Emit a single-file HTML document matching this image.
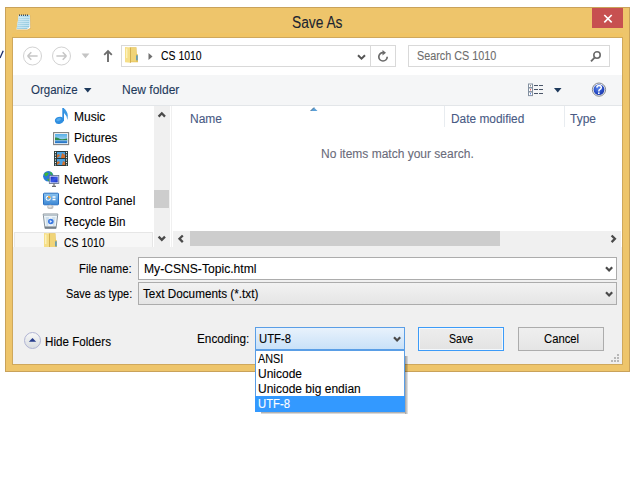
<!DOCTYPE html>
<html><head><meta charset="utf-8">
<style>
*{margin:0;padding:0;box-sizing:border-box}
html,body{width:640px;height:480px;overflow:hidden;background:#fff}
body{position:relative;font-family:"Liberation Sans",sans-serif;font-size:12px;color:#000}
.a{position:absolute}
.t{position:absolute;white-space:nowrap;font-size:12px;line-height:14px;transform-origin:0 0;-webkit-text-stroke:0.1px currentColor}
</style></head><body>

<!-- partial y from background window -->
<svg class="a" style="left:0;top:50px" width="5" height="9"><path d="M3.2 0.8 L0 8" stroke="#1a2a6a" stroke-width="1.3" fill="none"/></svg>

<!-- window frame -->
<div class="a" style="left:5px;top:7px;width:625px;height:365px;background:#eec56b;border:1px solid #c9a25a"></div>
<!-- client inner outline -->
<div class="a" style="left:12px;top:33px;width:611px;height:4px;background:#f0c464"></div>
<div class="a" style="left:12px;top:37px;width:611px;height:328px;border:1px solid #cfa85c"></div>

<!-- title -->
<div class="t" style="left:292px;top:14px;font-size:16px;line-height:18px;color:#1c2430;transform:scaleX(0.86)">Save As</div>

<!-- close -->
<div class="a" style="left:592px;top:8px;width:31px;height:20px;background:#c75050"></div>
<svg class="a" style="left:592px;top:8px" width="31" height="20"><path d="M12.3 7 L19.7 14.4 M19.7 7 L12.3 14.4" stroke="#fff" stroke-width="1.6"/></svg>

<!-- notepad icon -->
<svg class="a" style="left:15px;top:13px" width="18" height="18" viewBox="0 0 18 18">
 <defs><linearGradient id="np" x1="0" y1="0" x2="1" y2="1"><stop offset="0" stop-color="#c8e6f0"/><stop offset="1" stop-color="#88c4dc"/></linearGradient></defs>
 <path d="M4.5 2.3 L15.5 2.3 L16 15.5 L13 17.3 L2.2 17.3 Z" fill="#c9a86a" opacity="0.5"/>
 <path d="M3.8 2 L15 2 L15.2 15 L12.5 16.6 L1.5 16.6 Z" fill="#fdfdfd"/>
 <path d="M3.8 2 L14.8 2 L14.3 13.8 L12 16 L1.6 16 Z" fill="url(#np)"/>
 <path d="M3.6 4.5 H14.7 M3.4 6.5 H14.6 M3.1 8.5 H14.5 M2.8 10.5 H14.4 M2.5 12.5 H14.3 M2.2 14.5 H13" stroke="#d8eef6" stroke-width="0.7"/>
 <path d="M4.5 1.5 v1.3 M6.5 1.5 v1.3 M8.5 1.5 v1.3 M10.5 1.5 v1.3 M12.5 1.5 v1.3" stroke="#2a3040" stroke-width="1"/>
</svg>

<!-- client -->
<div class="a" style="left:13px;top:38px;width:609px;height:326px;background:#fff"></div>

<!-- nav bar -->
<svg class="a" style="left:13px;top:38px" width="120" height="36">
 <circle cx="19.5" cy="18" r="9" fill="none" stroke="#d2d2d2" stroke-width="1"/>
 <path d="M14.6 18 H24.6 M14.6 18 L18.3 14.3 M14.6 18 L18.3 21.7" stroke="#c6c6c6" stroke-width="1.6" fill="none"/>
 <circle cx="48.5" cy="18" r="9" fill="none" stroke="#d2d2d2" stroke-width="1"/>
 <path d="M43.4 18 H53.4 M53.4 18 L49.7 14.3 M53.4 18 L49.7 21.7" stroke="#c6c6c6" stroke-width="1.6" fill="none"/>
 <path d="M68.6 15.6 L76.4 15.6 L72.5 20.2 Z" fill="#c4c4c4"/>
 <path d="M95 13 V24" stroke="#6d6d6d" stroke-width="1.9"/><path d="M91.2 16.8 L95 13 L98.8 16.8" stroke="#6d6d6d" stroke-width="1.8" fill="none"/>
</svg>

<!-- address box -->
<div class="a" style="left:121px;top:45px;width:275px;height:22px;border:1px solid #d9d9d9;background:#fff"></div>
<div class="a" style="left:370px;top:46px;width:1px;height:20px;background:#d9d9d9"></div>
<svg class="a" style="left:124px;top:46px" width="16" height="17" viewBox="0 0 16 17">
 <path d="M5.5 1.2 L12.5 1.2 L12.8 8 L14 8.5 L14 16.3 L5.5 16.3 Z" fill="#e6c45c"/>
 <path d="M6.5 2 L12 2 L12 15.5 L6.5 15.5Z" fill="#f0d478"/>
 <path d="M1 1 L6.5 1.6 L6.5 16.8 L1 16.2 Z" fill="#f6df88"/>
 <path d="M2.8 2.5 L2.8 12" stroke="#fff8d0" stroke-width="1"/>
 <path d="M6.5 1.6 L6.5 16.8" stroke="#caa648" stroke-width="0.8"/>
 <rect x="12.3" y="9.3" width="1.3" height="5" fill="#3a8fd6"/>
</svg>
<svg class="a" style="left:147px;top:52px" width="8" height="9"><path d="M1.5 1 L5.5 4.5 L1.5 8 Z" fill="#707070"/></svg>
<div class="t" style="left:161px;top:49px;color:#000;transform:scaleX(0.87)">CS 1010</div>
<svg class="a" style="left:356px;top:53px" width="11" height="8"><path d="M2 2.2 L5.5 5.6 L9 2.2" stroke="#555" stroke-width="2" fill="none"/></svg>
<svg class="a" style="left:376px;top:49px" width="14" height="14" viewBox="0 0 14 14">
 <path d="M7 3.6 A4.2 4.2 0 1 0 11.2 7.8" stroke="#6a6a6a" stroke-width="1.7" fill="none"/>
 <path d="M6.5 1 L10 3.8 L6.5 6.6 Z" fill="#6a6a6a"/>
</svg>

<!-- search box -->
<div class="a" style="left:408px;top:45px;width:202px;height:22px;border:1px solid #d9d9d9;background:#fff"></div>
<div class="t" style="left:417px;top:49px;color:#6d6d6d;transform:scaleX(0.9)">Search CS 1010</div>
<svg class="a" style="left:589px;top:50px" width="14" height="14" viewBox="0 0 14 14">
 <circle cx="8" cy="5" r="3.2" stroke="#6a6a6a" stroke-width="1.6" fill="none"/>
 <path d="M5.6 7.6 L2 11.4" stroke="#6a6a6a" stroke-width="1.8"/>
</svg>

<!-- toolbar -->
<div class="a" style="left:13px;top:75px;width:609px;height:31px;background:#f5f6f7;border-bottom:1px solid #e3e6e9"></div>
<div class="t" style="left:31px;top:83px;color:#1e395b;transform:scaleX(0.96)">Organize</div>
<svg class="a" style="left:83px;top:87px" width="10" height="7"><path d="M1 1 L8.5 1 L4.75 5.5 Z" fill="#1e395b"/></svg>
<div class="t" style="left:122px;top:83px;color:#1e395b">New folder</div>
<svg class="a" style="left:527px;top:83px" width="18" height="14" viewBox="0 0 18 14">
 <rect x="1.5" y="1" width="4" height="3.6" fill="#fff" stroke="#8390a0" stroke-width="1"/>
 <rect x="1.5" y="5" width="4" height="3.6" fill="#fff" stroke="#8390a0" stroke-width="1"/>
 <rect x="1.5" y="9" width="4" height="3.6" fill="#fff" stroke="#8390a0" stroke-width="1"/>
 <rect x="3" y="2.3" width="1" height="1" fill="#555"/>
 <rect x="3" y="6.3" width="1" height="1" fill="#e02020"/>
 <rect x="3" y="10.3" width="1" height="1" fill="#2050d0"/>
 <path d="M7 2.5 H11 M12 2.5 H16 M7 6.5 H11 M12 6.5 H16 M7 10.5 H11 M12 10.5 H16" stroke="#4a5568" stroke-width="1.2"/>
</svg>
<svg class="a" style="left:553px;top:87px" width="10" height="7"><path d="M1 1 L8.5 1 L4.75 5.5 Z" fill="#1e395b"/></svg>
<svg class="a" style="left:591px;top:82px" width="16" height="16" viewBox="0 0 16 16">
 <defs><radialGradient id="hb" cx="0.4" cy="0.35" r="0.7"><stop offset="0" stop-color="#5a86e8"/><stop offset="0.6" stop-color="#2a4fc8"/><stop offset="1" stop-color="#1a36a8"/></radialGradient></defs>
 <circle cx="8" cy="7.6" r="6.6" fill="#f4f6f8" stroke="#80848c" stroke-width="1"/>
 <circle cx="8" cy="7.6" r="5.4" fill="url(#hb)"/>
 <path d="M5.8 5.6 Q6 3.6 8.2 3.6 Q10.4 3.7 10.3 5.6 Q10.2 6.9 8.6 7.7 Q7.8 8.2 7.8 9.4" stroke="#fff" stroke-width="1.5" fill="none"/>
 <rect x="7" y="10.4" width="1.6" height="1.6" fill="#fff"/>
</svg>

<!-- nav pane -->
<div class="a" style="left:14px;top:232px;width:139px;height:15px;background:#f7f7f7;border:1px solid #e6e6e6;border-bottom:none"></div>

<!-- Music -->
<svg class="a" style="left:54px;top:107px" width="16" height="18" viewBox="0 0 16 18">
 <path d="M8.3 1 L10 1 L10 14 L8.3 14 Z" fill="#2f8ee0"/>
 <path d="M9.5 1 Q13.5 4 13.8 8.5 L13.5 13 Q13 8.5 10 6Z" fill="#3a98e4"/>
 <ellipse cx="5.3" cy="13.4" rx="4.4" ry="3.5" transform="rotate(-18 5.3 13.4)" fill="#2f8ee0"/>
 <ellipse cx="4.6" cy="12.6" rx="2.4" ry="1.4" transform="rotate(-18 4.6 12.6)" fill="#62b6f2" opacity="0.7"/>
</svg>
<div class="t" style="left:74px;top:110px;color:#000">Music</div>
<!-- Pictures -->
<svg class="a" style="left:53px;top:132px" width="17" height="14" viewBox="0 0 17 14">
 <rect x="0.6" y="0.6" width="15" height="12" fill="#fff" stroke="#808080" stroke-width="1.1"/>
 <defs><linearGradient id="sky" x1="0" y1="0" x2="0" y2="1"><stop offset="0" stop-color="#58b0e8"/><stop offset="1" stop-color="#c8e4f4"/></linearGradient></defs>
 <rect x="2" y="2" width="12.2" height="9.2" fill="url(#sky)"/>
 <path d="M2 5.5 Q5 5 7 7 Q10 7.5 14.2 6.5 V8.4 H2Z" fill="#2c8a4a"/>
 <rect x="2" y="8.4" width="12.2" height="2.8" fill="#2a78c8"/>
 <rect x="2" y="8.4" width="12.2" height="0.8" fill="#9cc8e8"/>
</svg>
<div class="t" style="left:74px;top:131px;color:#000">Pictures</div>
<!-- Videos -->
<svg class="a" style="left:54px;top:151px" width="15" height="16" viewBox="0 0 15 16">
 <rect x="0" y="0" width="14" height="15" fill="#2a3a3a"/>
 <rect x="3" y="1" width="8" height="6" fill="#4aa0e0"/>
 <rect x="3" y="8" width="8" height="6" fill="#4aa0e0"/>
 <path d="M3 4 L5 3 L6 5 L3 7Z M8 2 L11 4 V7 H7Z M3 11 L5 10 L6 12 L3 14Z M9 10 L11 11 V14 H8Z" fill="#d07030"/>
 <path d="M1.5 1.5 v0.01 M1.5 4 v0.01 M1.5 6.5 v0.01 M1.5 9 v0.01 M1.5 11.5 v0.01 M1.5 13.8 v0.01 M12.5 1.5 v0.01 M12.5 4 v0.01 M12.5 6.5 v0.01 M12.5 9 v0.01 M12.5 11.5 v0.01 M12.5 13.8 v0.01" stroke="#e8f0f0" stroke-width="1.3" stroke-linecap="round"/>
</svg>
<div class="t" style="left:74px;top:152px;color:#000">Videos</div>
<!-- Network -->
<svg class="a" style="left:42px;top:170px" width="18" height="18" viewBox="0 0 18 18">
 <circle cx="6.3" cy="6.2" r="5.2" fill="#2a7ad8"/>
 <path d="M2.2 3.8 Q4.5 1.6 6.8 3.2 Q6 5.5 4 6.5 Q2.5 6 2.2 3.8Z M7.5 1.5 Q10 2.2 10.8 4.5 L9 5Z M5 9 Q7 8 8 10.5 L6.5 11.3Z" fill="#3cb43c"/>
 <rect x="7.3" y="5.5" width="9.5" height="8" fill="#e8ecf4" stroke="#5a6a8a" stroke-width="0.8"/>
 <defs><linearGradient id="mon" x1="0" y1="0" x2="1" y2="1"><stop offset="0" stop-color="#1a2ab8"/><stop offset="0.5" stop-color="#3a5ae8"/><stop offset="1" stop-color="#1a30c0"/></linearGradient></defs>
 <rect x="8.5" y="6.6" width="7.2" height="5.8" fill="url(#mon)"/>
 <path d="M12 13.6 V15.8 M10 16.4 H14" stroke="#6a6a6a" stroke-width="1.2"/>
</svg>
<div class="t" style="left:64px;top:173px;color:#000">Network</div>
<!-- Control Panel -->
<svg class="a" style="left:42px;top:192px" width="17" height="17" viewBox="0 0 17 17">
 <defs><linearGradient id="cp" x1="0" y1="0" x2="0" y2="1"><stop offset="0" stop-color="#8cc4f0"/><stop offset="1" stop-color="#3a86d4"/></linearGradient></defs>
 <rect x="1.5" y="1.2" width="15" height="11.6" rx="0.8" fill="url(#cp)" stroke="#2a70c0" stroke-width="1"/>
 <circle cx="6.2" cy="6.2" r="2.5" fill="#fff"/>
 <circle cx="6.2" cy="6.2" r="1.5" fill="#5aa2e0"/>
 <path d="M6.2 3.7 A2.5 2.5 0 0 1 8.7 6.2 L6.2 6.2Z" fill="#f0a030"/>
 <path d="M10.5 5 H13.5 M10.5 7.5 H13.5" stroke="#fff" stroke-width="1.3"/>
 <ellipse cx="8.3" cy="15" rx="3.2" ry="2.2" fill="#c0c0c0"/>
 <ellipse cx="8" cy="14.4" rx="1.8" ry="1" fill="#e8e8e8"/>
</svg>
<div class="t" style="left:64px;top:194px;color:#000;transform:scaleX(0.98)">Control Panel</div>
<!-- Recycle Bin -->
<svg class="a" style="left:42px;top:212px" width="17" height="18" viewBox="0 0 17 18">
 <path d="M1.2 2 L15.8 2 L14 16.5 L3 16.5Z" fill="#eef4f8" stroke="#8a949c" stroke-width="1"/>
 <path d="M1.5 2.5 L15.5 2.5 L15.2 4 L1.8 4Z" fill="#b8c4cc"/>
 <path d="M3.5 5 L7 5 L6 14 L4.5 14Z M10 5 L13.5 5 L12.5 14 L11 14Z" fill="#cfe0ec"/>
 <circle cx="8.8" cy="9.5" r="2.8" fill="#3a78e0"/>
 <path d="M7.8 8 L10.2 9.5 L7.8 11Z" fill="#dfe8ff"/>
 <path d="M3 15.2 L14 15.2" stroke="#6a747c" stroke-width="1.4"/>
</svg>
<div class="t" style="left:64px;top:215px;color:#000;transform:scaleX(0.97)">Recycle Bin</div>
<!-- CS 1010 -->
<svg class="a" style="left:43px;top:232px" width="16" height="17" viewBox="0 0 16 17">
 <path d="M5.5 1.2 L12.5 1.2 L12.8 8 L14 8.5 L14 16.3 L5.5 16.3 Z" fill="#e6c45c"/>
 <path d="M6.5 2 L12 2 L12 15.5 L6.5 15.5Z" fill="#f0d478"/>
 <path d="M1 1 L6.5 1.6 L6.5 16.8 L1 16.2 Z" fill="#f6df88"/>
 <path d="M2.8 2.5 L2.8 12" stroke="#fff8d0" stroke-width="1"/>
 <path d="M6.5 1.6 L6.5 16.8" stroke="#caa648" stroke-width="0.8"/>
 <rect x="12.3" y="9.3" width="1.3" height="5" fill="#3a8fd6"/>
</svg>
<div class="t" style="left:64px;top:236px;color:#000;transform:scaleX(0.87)">CS 1010</div>

<!-- nav scrollbar -->
<div class="a" style="left:154px;top:106px;width:16px;height:141px;background:#f0f0f0"></div>
<div class="a" style="left:154px;top:190px;width:15px;height:18px;background:#cdcdcd"></div>
<svg class="a" style="left:156px;top:110px" width="12" height="9"><path d="M2.6 6.6 L5.8 3.3 L9 6.6" stroke="#4a4a4a" stroke-width="2.3" fill="none"/></svg>
<svg class="a" style="left:156px;top:234px" width="12" height="9"><path d="M2.6 2.6 L5.8 5.9 L9 2.6" stroke="#4a4a4a" stroke-width="2.3" fill="none"/></svg>

<!-- file pane -->
<div class="a" style="left:171px;top:106px;width:1px;height:141px;background:#f0f0f0"></div>
<div class="t" style="left:190px;top:112px;color:#485a84">Name</div>
<svg class="a" style="left:310px;top:106px" width="9" height="6"><path d="M0.5 5 L4 1.5 L7.5 5Z" fill="#5aa0d8"/><path d="M0.5 5 L4 1.5" stroke="#3a5a7a" stroke-width="0.8"/></svg>
<div class="a" style="left:444px;top:106px;width:1px;height:21px;background:#e8ecf0"></div>
<div class="t" style="left:451px;top:112px;color:#485a84;transform:scaleX(0.99)">Date modified</div>
<div class="a" style="left:564px;top:106px;width:1px;height:21px;background:#e8ecf0"></div>
<div class="t" style="left:570px;top:112px;color:#485a84">Type</div>
<div class="t" style="left:321px;top:147px;color:#6a6b7a">No items match your search.</div>

<!-- h scrollbar -->
<div class="a" style="left:173px;top:231px;width:448px;height:16px;background:#f0f0f0"></div>
<div class="a" style="left:190px;top:231px;width:310px;height:15px;background:#cdcdcd"></div>
<svg class="a" style="left:176px;top:233px" width="10" height="12"><path d="M6.8 2.5 L3.5 5.8 L6.8 9.1" stroke="#4a4a4a" stroke-width="2.3" fill="none"/></svg>
<svg class="a" style="left:608px;top:233px" width="10" height="12"><path d="M3.6 2.5 L6.9 5.8 L3.6 9.1" stroke="#4a4a4a" stroke-width="2.3" fill="none"/></svg>

<!-- bottom dialog area -->
<div class="a" style="left:13px;top:247px;width:609px;height:117px;background:#f0f0f0"></div>

<div class="t" style="left:79px;top:262px;color:#000;transform:scaleX(0.94)">File name:</div>
<div class="a" style="left:138px;top:257px;width:479px;height:23px;background:#fff;border:1px solid #acacac"></div>
<div class="t" style="left:144px;top:262px;color:#000;transform:scaleX(1.01)">My-CSNS-Topic.html</div>
<svg class="a" style="left:604px;top:265px" width="11" height="8"><path d="M2 2.2 L5.1 5.5 L8.2 2.2" stroke="#4a4a4a" stroke-width="2.2" fill="none"/></svg>

<div class="t" style="left:66px;top:287px;color:#000;transform:scaleX(0.91)">Save as type:</div>
<div class="a" style="left:138px;top:282px;width:479px;height:23px;background:linear-gradient(#f2f2f2,#e5e5e5);border:1px solid #acacac"></div>
<div class="t" style="left:143px;top:287px;color:#000;transform:scaleX(0.977)">Text Documents (*.txt)</div>
<svg class="a" style="left:604px;top:290px" width="11" height="8"><path d="M2 2.2 L5.1 5.5 L8.2 2.2" stroke="#4a4a4a" stroke-width="2.2" fill="none"/></svg>

<!-- hide folders -->
<svg class="a" style="left:23px;top:331px" width="19" height="19" viewBox="0 0 19 19">
 <defs><linearGradient id="hg" x1="0" y1="0" x2="0" y2="1"><stop offset="0" stop-color="#f8f8f8"/><stop offset="1" stop-color="#d8dce0"/></linearGradient></defs>
 <circle cx="9.5" cy="9.5" r="8" fill="url(#hg)" stroke="#b0b4d4" stroke-width="1"/>
 <path d="M5.8 10.8 L13.2 10.8 L9.5 7 Z" fill="#263c8c"/>
</svg>
<div class="t" style="left:45px;top:335px;color:#000;transform:scaleX(0.97)">Hide Folders</div>

<!-- encoding -->
<div class="t" style="left:197px;top:332px;color:#000;transform:scaleX(0.98)">Encoding:</div>
<div class="a" style="left:255px;top:327px;width:150px;height:23px;background:linear-gradient(#e8f2fc,#c9e1f8);border:1px solid #5a9ee6"></div>
<div class="t" style="left:259px;top:332px;color:#000;transform:scaleX(0.94)">UTF-8</div>
<svg class="a" style="left:392px;top:335px" width="11" height="8"><path d="M2 2.2 L5.1 5.5 L8.2 2.2" stroke="#4a4a4a" stroke-width="2.2" fill="none"/></svg>

<!-- buttons -->
<div class="a" style="left:418px;top:327px;width:86px;height:24px;background:linear-gradient(#ededed,#e3e3e3);border:1px solid #3c9bf8;box-shadow:inset 0 0 0 1px #f4f8fc"></div>
<div class="t" style="left:449px;top:332px;color:#000;transform:scaleX(0.88)">Save</div>
<div class="a" style="left:518px;top:327px;width:86px;height:24px;background:linear-gradient(#efefef,#e5e5e5);border:1px solid #acacac"></div>
<div class="t" style="left:544px;top:332px;color:#000;transform:scaleX(0.94)">Cancel</div>

<!-- grip -->
<svg class="a" style="left:610px;top:353px" width="10" height="10">
 <rect x="7" y="1" width="2" height="2" fill="#b8b8b8"/>
 <rect x="4" y="4" width="2" height="2" fill="#b8b8b8"/><rect x="7" y="4" width="2" height="2" fill="#b8b8b8"/>
 <rect x="1" y="7" width="2" height="2" fill="#b8b8b8"/><rect x="4" y="7" width="2" height="2" fill="#b8b8b8"/><rect x="7" y="7" width="2" height="2" fill="#b8b8b8"/>
</svg>

<!-- dropdown list -->
<div class="a" style="left:405px;top:356px;width:3px;height:58px;background:linear-gradient(to right,rgba(0,0,0,0.38),rgba(0,0,0,0.08))"></div>
<div class="a" style="left:261px;top:412px;width:144px;height:2px;background:linear-gradient(rgba(0,0,0,0.38),rgba(0,0,0,0.08))"></div>
<div class="a" style="left:255px;top:350px;width:150px;height:62px;background:#fff;border:1px solid #5a9ee6"></div>
<div class="a" style="left:255px;top:396px;width:150px;height:16px;background:#3399ff"></div>
<div class="t" style="left:258px;top:352px;color:#000;transform:scaleX(0.9)">ANSI</div>
<div class="t" style="left:258px;top:367px;color:#000;transform:scaleX(1)">Unicode</div>
<div class="t" style="left:258px;top:382px;color:#000;transform:scaleX(1)">Unicode big endian</div>
<div class="t" style="left:258px;top:397px;color:#fff;transform:scaleX(0.94)">UTF-8</div>

</body></html>
